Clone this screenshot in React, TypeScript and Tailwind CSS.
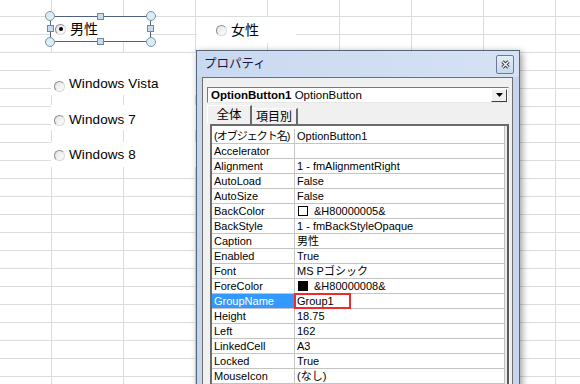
const jp = "font-['Liberation_Sans','Noto_Sans_CJK_JP',sans-serif]";

const rows: { name: string; value: string; swatch?: "white" | "black"; selected?: boolean; tight?: boolean }[] = [
  { name: "(オブジェクト名)", value: "OptionButton1", tight: true },
  { name: "Accelerator", value: "" },
  { name: "Alignment", value: "1 - fmAlignmentRight" },
  { name: "AutoLoad", value: "False" },
  { name: "AutoSize", value: "False" },
  { name: "BackColor", value: "&H80000005&", swatch: "white" },
  { name: "BackStyle", value: "1 - fmBackStyleOpaque" },
  { name: "Caption", value: "男性" },
  { name: "Enabled", value: "True" },
  { name: "Font", value: "MS Pゴシック" },
  { name: "ForeColor", value: "&H80000008&", swatch: "black" },
  { name: "GroupName", value: "Group1", selected: true },
  { name: "Height", value: "18.75" },
  { name: "Left", value: "162" },
  { name: "LinkedCell", value: "A3" },
  { name: "Locked", value: "True" },
  { name: "MouseIcon", value: "(なし)" },
];

const Radio = ({ checked }: { checked?: boolean }) => (
  <span className="inline-flex h-[11px] w-[11px] shrink-0 items-center justify-center rounded-full border border-t-[#8c8c8c] border-l-[#8c8c8c] border-r-[#d8d8d8] border-b-[#d8d8d8] bg-gradient-to-br from-[#e4e4e4] to-white">
    {checked && <span className="h-[4px] w-[4px] rounded-full bg-black" />}
  </span>
);

const Option = ({ label, checked, cls }: { label: string; checked?: boolean; cls: string }) => (
  <div className={`absolute flex items-center bg-white ${cls}`}>
    <Radio checked={checked} />
    <span className={`ml-[4px] text-black ${jp}`}>{label}</span>
  </div>
);

const Handle = ({ round, cls }: { round?: boolean; cls: string }) =>
  round ? (
    <span className={`absolute h-[10px] w-[10px] rounded-full border border-[#8093a6] bg-[#d6eef4] ${cls}`} />
  ) : (
    <span className={`absolute h-[7px] w-[7px] border border-[#6f88a8] bg-[#c8dcec] ${cls}`} />
  );

export default function App() {
  return (
    <div className="relative h-[384px] w-[580px] overflow-hidden bg-white bg-[linear-gradient(to_right,#dadcdd_1px,transparent_1px),linear-gradient(to_bottom,#dadcdd_1px,transparent_1px)] bg-size-[72px_18px] bg-position-[51px_16px]">
      {/* option buttons on the sheet */}
      <Option label="男性" checked cls="left-[51px] top-[17px] h-[24px] w-[99px] pl-[4px] text-[14px]" />
      <Option label="女性" cls="left-[197px] top-[17px] h-[26px] w-[99px] pl-[19px] text-[14px]" />
      <Option label="Windows Vista" cls="left-[51px] top-[53px] h-[42px] w-[150px] items-end pb-[3px] pl-[3px] text-[13.5px] leading-[16px] tracking-[0.1px]" />
      <Option label="Windows 7" cls="left-[51px] top-[105px] h-[25px] w-[150px] pl-[3px] pt-[5px] text-[13.5px] tracking-[0.1px]" />
      <Option label="Windows 8" cls="left-[51px] top-[142px] h-[25px] w-[150px] pl-[3px] pt-[1px] text-[13.5px] tracking-[0.1px]" />

      {/* selection frame */}
      <div className="absolute left-[50px] top-[16px] h-[26px] w-[101px] border border-[#4f6080]">
        <Handle round cls="-left-[6px] -top-[6px]" />
        <Handle round cls="-right-[6px] -top-[6px]" />
        <Handle round cls="-bottom-[6px] -left-[6px]" />
        <Handle round cls="-bottom-[6px] -right-[6px]" />
        <Handle cls="left-[46px] -top-[4px]" />
        <Handle cls="left-[46px] -bottom-[4px]" />
        <Handle cls="-left-[4px] top-[8px]" />
        <Handle cls="-right-[4px] top-[8px]" />
      </div>

      {/* properties window */}
      <div className="absolute left-[196px] top-[50px] flex h-[345px] w-[324px] flex-col border border-[#56657a] bg-[#c6d6ee] shadow-[2px_2px_7px_rgba(0,0,0,0.4)]">
        <div className="flex h-[26px] shrink-0 items-center justify-between bg-gradient-to-r from-[#c9d9f0] to-[#d5e2f4] pl-[7px] pr-[5px]">
          <span className={`text-[12.5px] text-[#1a1840] ${jp}`}>プロパティ</span>
          <div className="flex h-[19px] w-[18px] items-center justify-center rounded-[2px] border border-[#6d7c90] bg-gradient-to-b from-[#e4edf8] to-[#c8d8ee]">
            <svg width="9" height="9" viewBox="0 0 9 9">
              <path d="M1.5 1.5 L7.5 7.5 M7.5 1.5 L1.5 7.5" stroke="#3a3a3a" strokeWidth="3.2" />
              <path d="M1.5 1.5 L7.5 7.5 M7.5 1.5 L1.5 7.5" stroke="#ffffff" strokeWidth="1.3" />
            </svg>
          </div>
        </div>

        <div className="ml-[5px] mr-[6px] flex min-h-0 flex-1 flex-col border border-[#6f6f6f] bg-[#f0f0f0] pl-[4px] pr-[3px] pt-[9px]">
          {/* object dropdown */}
          <div className="flex h-[16px] shrink-0 items-center border border-t-[#7a7a7a] border-l-[#7a7a7a] border-r-[#e8e8e8] border-b-[#e8e8e8] bg-white pl-[3px] pr-[1px]">
            <span className="flex-1 whitespace-nowrap font-['Liberation_Sans',sans-serif] text-[11.5px] leading-[14px] text-black">
              <b>OptionButton1</b> OptionButton
            </span>
            <div className="flex h-[13px] w-[16px] items-center justify-center border border-t-white border-l-white border-r-[#404040] border-b-[#404040] bg-[#f0f0f0]">
              <svg width="7" height="4" viewBox="0 0 7 4">
                <path d="M0 0 H7 L3.5 4 Z" fill="#000" />
              </svg>
            </div>
          </div>

          {/* tabs */}
          <div className="mt-[2px] flex h-[19px] shrink-0 items-end">
            <div className={`flex h-[19px] w-[45px] items-center justify-center border-l border-t border-r-2 border-l-white border-t-white border-r-[#6a6a6a] bg-[#f0f0f0] text-[12.5px] text-black ${jp}`}>
              全体
            </div>
            <div className={`flex h-[16px] w-[46px] items-center justify-center border-t border-r-2 border-t-white border-r-[#6a6a6a] bg-[#f0f0f0] text-[12px] text-black ${jp}`}>
              項目別
            </div>
          </div>

          {/* property grid */}
          <div className="ml-[3px] flex min-h-0 flex-1 overflow-hidden border-l-2 border-t-2 border-l-[#6b6b6b] border-t-[#6b6b6b]">
            <div className="flex min-w-0 flex-1 flex-col overflow-hidden bg-white pt-[3px]">
              {rows.map((r) => (
                <div key={r.name} className={`flex h-[15px] shrink-0 border-b border-[#c4c4c4] text-[11px] leading-[14px] text-black ${jp}`}>
                  <div
                    className={`w-[83px] shrink-0 overflow-hidden whitespace-nowrap border-r border-[#c4c4c4] pl-[2px] ${
                      r.selected ? "bg-[#3399ff] text-white" : ""
                    } ${r.tight ? "tracking-[-1px]" : ""}`}
                  >
                    {r.name}
                  </div>
                  <div className="relative flex flex-1 items-center whitespace-nowrap pl-[2px]">
                    {r.swatch && (
                      <span
                        className={`mr-[6px] ml-[1px] h-[10px] w-[10px] border border-black ${
                          r.swatch === "black" ? "bg-black" : "bg-white"
                        }`}
                      />
                    )}
                    {r.value}
                    {r.selected && (
                      <span className="absolute -left-[1px] -top-[1px] h-[16px] w-[57px] border-2 border-[#ee2a2a]" />
                    )}
                  </div>
                </div>
              ))}
            </div>
            <div className="w-[5px] shrink-0 border-l border-r-2 border-l-[#c0c0c0] border-r-[#5a5a5a] bg-[#e8e8e8]" />
          </div>
        </div>
      </div>
    </div>
  );
}
